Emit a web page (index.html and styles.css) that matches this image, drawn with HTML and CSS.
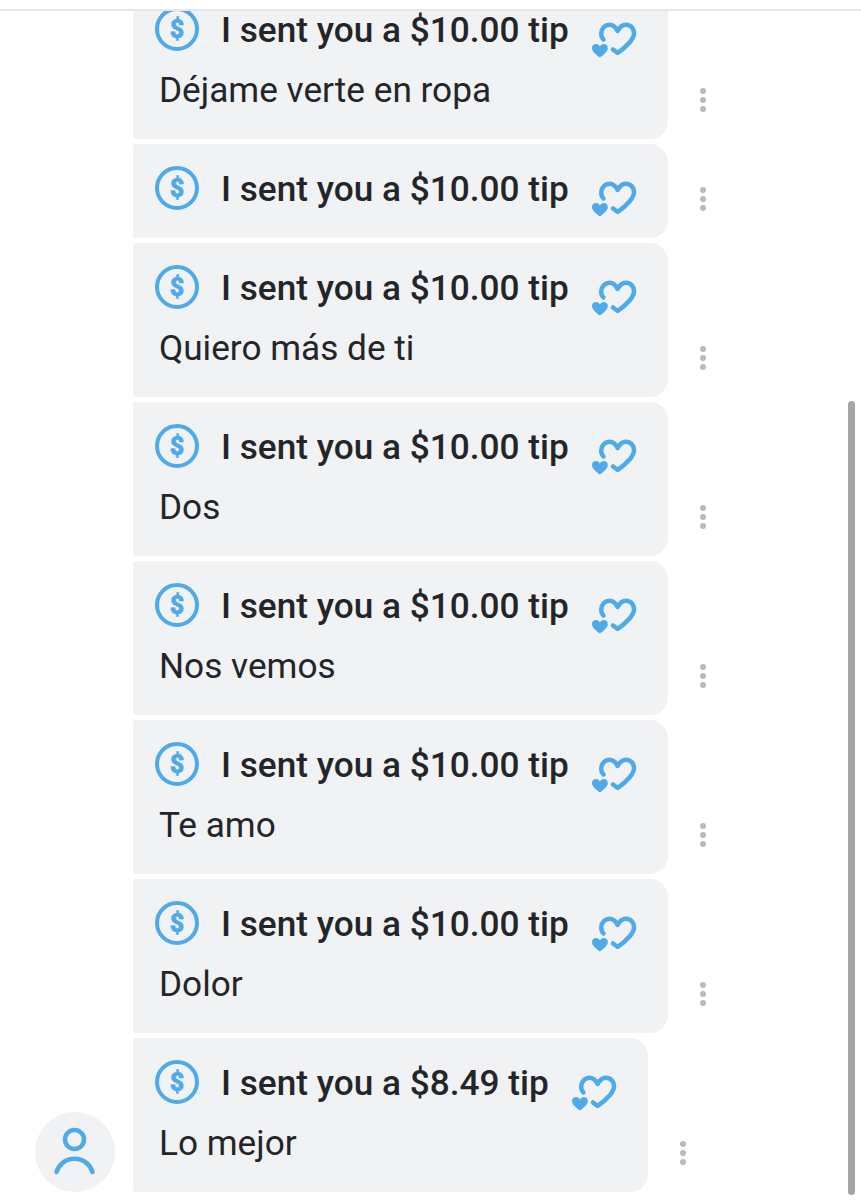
FILE: index.html
```html
<!DOCTYPE html>
<html lang="en">
<head>
    <meta charset="UTF-8">
    <meta name="viewport" content="width=device-width, initial-scale=1.0">
    <title>Messages</title>
    <link rel="stylesheet" href="styles.css">
</head>
<body>
    <!-- shared icons -->
    <svg class="icon-defs" width="0" height="0">
        <symbol id="liked" viewBox="0 0 45 40">
            <path class="liked-line" d="M11.5 21.5C9.5 19.5 9 17.5 9.3 15 9.8 10 13.5 6.7 17.5 6.7 21 6.7 24 9.5 25.6 13 27.5 9.5 30.5 6.7 34 6.7 38.5 6.7 42 10.5 42 15 42 18.5 40.5 21 38 24 34.5 28 30 32 25.7 35L21 31.5"/>
            <path class="liked-fill" d="M7.9 39.5C3 36 0 33 0 30 0 27.5 2 26 4 26 5.8 26 7.2 27 7.9 28.5 8.6 27 10 26 11.8 26 13.8 26 15.8 27.5 15.8 30 15.8 33 12.8 36 7.9 39.5Z"/>
        </symbol>
    </svg>

    <div class="top-bar"></div>
    <div class="chat">
        <div class="chat-list">
            <div class="row">
                <div class="avatar-slot"></div>
                <div class="bubble">
                    <div class="tip-line">
                        <span class="coin">$</span>
                        <span class="tip-text">I sent you a $10.00 tip</span>
                        <svg class="liked"><use href="#liked"/></svg>
                    </div>
                    <p class="note">Déjame verte en ropa</p>
                </div>
                <div class="more"><i></i><i></i><i></i></div>
            </div>
            <div class="row">
                <div class="avatar-slot"></div>
                <div class="bubble">
                    <div class="tip-line">
                        <span class="coin">$</span>
                        <span class="tip-text">I sent you a $10.00 tip</span>
                        <svg class="liked"><use href="#liked"/></svg>
                    </div>
                </div>
                <div class="more"><i></i><i></i><i></i></div>
            </div>
            <div class="row">
                <div class="avatar-slot"></div>
                <div class="bubble">
                    <div class="tip-line">
                        <span class="coin">$</span>
                        <span class="tip-text">I sent you a $10.00 tip</span>
                        <svg class="liked"><use href="#liked"/></svg>
                    </div>
                    <p class="note">Quiero más de ti</p>
                </div>
                <div class="more"><i></i><i></i><i></i></div>
            </div>
            <div class="row">
                <div class="avatar-slot"></div>
                <div class="bubble">
                    <div class="tip-line">
                        <span class="coin">$</span>
                        <span class="tip-text">I sent you a $10.00 tip</span>
                        <svg class="liked"><use href="#liked"/></svg>
                    </div>
                    <p class="note">Dos</p>
                </div>
                <div class="more"><i></i><i></i><i></i></div>
            </div>
            <div class="row">
                <div class="avatar-slot"></div>
                <div class="bubble">
                    <div class="tip-line">
                        <span class="coin">$</span>
                        <span class="tip-text">I sent you a $10.00 tip</span>
                        <svg class="liked"><use href="#liked"/></svg>
                    </div>
                    <p class="note">Nos vemos</p>
                </div>
                <div class="more"><i></i><i></i><i></i></div>
            </div>
            <div class="row">
                <div class="avatar-slot"></div>
                <div class="bubble">
                    <div class="tip-line">
                        <span class="coin">$</span>
                        <span class="tip-text">I sent you a $10.00 tip</span>
                        <svg class="liked"><use href="#liked"/></svg>
                    </div>
                    <p class="note">Te amo</p>
                </div>
                <div class="more"><i></i><i></i><i></i></div>
            </div>
            <div class="row">
                <div class="avatar-slot"></div>
                <div class="bubble">
                    <div class="tip-line">
                        <span class="coin">$</span>
                        <span class="tip-text">I sent you a $10.00 tip</span>
                        <svg class="liked"><use href="#liked"/></svg>
                    </div>
                    <p class="note">Dolor</p>
                </div>
                <div class="more"><i></i><i></i><i></i></div>
            </div>
            <div class="row">
                <div class="avatar-slot">
                    <div class="avatar">
                        <svg width="79" height="79" viewBox="0 0 79 79">
                            <circle class="avatar-line" cx="39.5" cy="27.5" r="9.5"/>
                            <path class="avatar-line" d="M21.5 60C24 52 31 46.7 39.5 46.7S55 52 57.5 60"/>
                        </svg>
                    </div>
                </div>
                <div class="bubble">
                    <div class="tip-line">
                        <span class="coin">$</span>
                        <span class="tip-text">I sent you a $8.49 tip</span>
                        <svg class="liked"><use href="#liked"/></svg>
                    </div>
                    <p class="note">Lo mejor</p>
                </div>
                <div class="more"><i></i><i></i><i></i></div>
            </div>
        </div>
        <div class="scroll-thumb"></div>
    </div>
</body>
</html>
```

FILE: styles.css
```css
html, body {
    height: 100%;
}
body {
    background: #fff;
    color: #242529;
    font-family: Roboto, Arial, sans-serif;
    margin: 0;
    padding: 0;
    display: flex;
    flex-direction: column;
    overflow: hidden;
}
.icon-defs {
    position: absolute;
}
/* header sits over the list, so the scrolled bubble goes under it */
.top-bar {
    height: 9px;
    flex: none;
    background: #fff;
    border-bottom: 2px solid #e6e6eb;
    position: relative;
    z-index: 1;
}
.chat {
    flex: 1;
    position: relative;
}
.chat-list {
    display: flex;
    flex-direction: column;
    gap: 5px;
    margin-top: -26px;
}
.row {
    display: flex;
    align-items: flex-end;
}
.avatar-slot {
    width: 133px;
    flex: none;
    padding-left: 35px;
    box-sizing: border-box;
}
.avatar {
    width: 80px;
    height: 80px;
    border-radius: 50%;
    background: #f1f2f4;
}
.avatar-line {
    fill: none;
    stroke: #4eaaea;
    stroke-width: 4.5;
    stroke-linecap: round;
}
.bubble {
    background: #f1f2f4;
    border-radius: 3px 18px 18px 3px;
    padding: 21px 31px 28px 22px;
}
.tip-line {
    display: flex;
    align-items: flex-start;
    height: 45px;
}
.coin {
    width: 44px;
    height: 44px;
    margin-top: 1px;
    box-sizing: border-box;
    border: 4.5px solid #4eaaea;
    border-radius: 50%;
    color: #4eaaea;
    font-size: 25px;
    font-weight: 900;
    line-height: 37px;
    text-align: center;
    -webkit-text-stroke: 0.5px #4eaaea;
}
.tip-text {
    margin: 5px 0 0 22px;
    font-size: 35.2px;
    font-weight: 500;
    line-height: 38px;
    white-space: nowrap;
}
.liked {
    width: 45px;
    height: 40px;
    margin: 12px 0 0 23px;
    flex: none;
}
.liked-line {
    fill: none;
    stroke: #4eaaea;
    stroke-width: 4.5;
    stroke-linecap: round;
    stroke-linejoin: round;
}
.liked-fill {
    fill: #4eaaea;
}
.note {
    margin: 18px 0 0 4px;
    font-size: 35.2px;
    line-height: 42px;
}
.more {
    margin: 0 0 27px 32px;
    display: flex;
    flex-direction: column;
    gap: 3px;
}
.more i {
    display: block;
    width: 6px;
    height: 6px;
    border-radius: 50%;
    background: #b9b9c1;
}
.scroll-thumb {
    position: absolute;
    right: 6px;
    top: 390px;
    bottom: 5px;
    width: 7px;
    border-radius: 4px;
    background: #a6a6a6;
}
```
